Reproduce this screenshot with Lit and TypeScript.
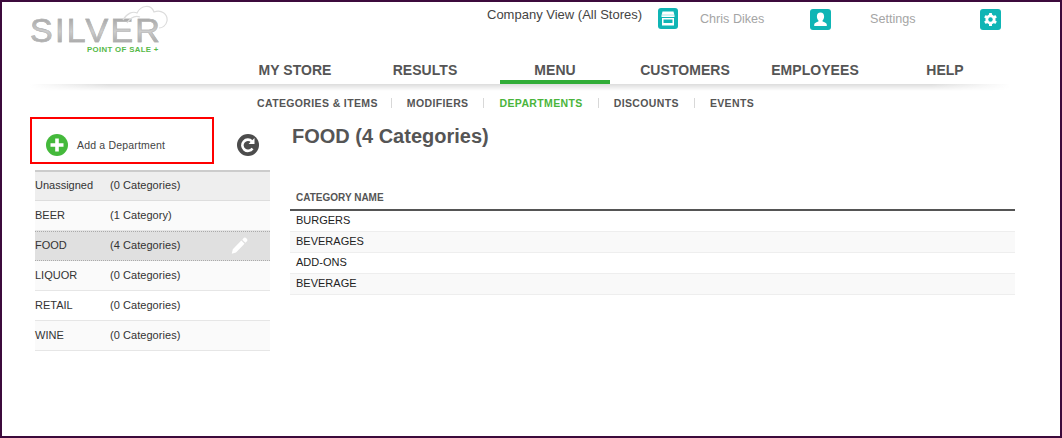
import { LitElement, html, css, svg } from "lit";
import { customElement } from "lit/decorators.js";

const NAV = ["MY STORE", "RESULTS", "MENU", "CUSTOMERS", "EMPLOYEES", "HELP"];
const SUB = ["CATEGORIES & ITEMS", "MODIFIERS", "DEPARTMENTS", "DISCOUNTS", "EVENTS"];
const DEPTS: [string, string][] = [
  ["Unassigned", "(0 Categories)"],
  ["BEER", "(1 Category)"],
  ["FOOD", "(4 Categories)"],
  ["LIQUOR", "(0 Categories)"],
  ["RETAIL", "(0 Categories)"],
  ["WINE", "(0 Categories)"],
];
const CATS = ["BURGERS", "BEVERAGES", "ADD-ONS", "BEVERAGE"];

const storeIcon = svg`<rect x="0" y="0" width="20" height="21" rx="3" fill="#0fb5b5"/>
<path d="M4.5 3.5h11l1 4v1.5h-13V7.5z M4 10h12v7.5H4z" fill="#fff"/><rect x="5.5" y="11.5" width="9" height="3.5" fill="#0fb5b5"/><rect x="3.5" y="6.5" width="13" height="1" fill="#0fb5b5" opacity=".35"/>`;
const userIcon = svg`<rect x="0" y="0" width="21" height="21" rx="3" fill="#0fb5b5"/>
<path d="M10.5 3.5c2.3 0 3.6 1.7 3.6 3.9 0 1.6-.7 3-1.5 3.9v1.1c1.8.7 4.2 1.5 4.2 3.2v1.4H4.2v-1.4c0-1.7 2.4-2.5 4.2-3.2v-1.1c-.8-.9-1.5-2.3-1.5-3.9 0-2.2 1.3-3.9 3.6-3.9z" fill="#fff"/>`;
const gearIcon = svg`<rect x="0" y="0" width="21" height="21" rx="3" fill="#0fb5b5"/>
<g fill="#fff"><circle cx="10.5" cy="10.5" r="5"/>
<rect x="9" y="4" width="3" height="13" rx=".5"/><rect x="9" y="4" width="3" height="13" rx=".5" transform="rotate(60 10.5 10.5)"/><rect x="9" y="4" width="3" height="13" rx=".5" transform="rotate(120 10.5 10.5)"/></g>
<circle cx="10.5" cy="10.5" r="2.2" fill="#0fb5b5"/>`;

@customElement("app-root")
export class AppRoot extends LitElement {
  static styles = css`
    :host { display: block; font-family: "Liberation Sans", Arial, sans-serif; }
    * { box-sizing: border-box; }
    .frame { width: 1062px; height: 438px; border: 2px solid #3c0a3c; background: #fff; overflow: hidden; display: flex; flex-direction: column; }
    .top { display: flex; height: 57px; align-items: flex-start; }
    .logo { position: relative; width: 140px; margin: 13px 0 0 28px; height: 44px; flex: none; }
    .silver { font-size: 34px; line-height: 30px; letter-spacing: 2.3px; font-weight: 400; display: block; white-space: nowrap;
      -webkit-text-stroke: .6px #b4b4b4;
      background: linear-gradient(180deg, #9d9d9d 0%, #cdcdcd 55%, #a2a2a2 100%); -webkit-background-clip: text; background-clip: text; color: transparent; }
    .pos { display: block; margin: 1px 0 0 57px; font-size: 7.8px; line-height: 8px; font-weight: 700; color: #56b948; letter-spacing: .35px; white-space: nowrap; }
    .cloud { position: absolute; left: 92px; top: -11px; }
    .company { margin: 6px 0 0 317px; width: 171px; font-size: 13px; line-height: 14px; color: #444; white-space: nowrap; }
    .ic { display: block; flex: none; margin-top: 6px; }
    .ic.u { margin-top: 7px; }
    .dim { font-size: 12.6px; line-height: 14px; color: #a5a5a5; margin-top: 10px; white-space: nowrap; }
    .chris { width: 110px; margin-left: 22px; }
    .settings { width: 110px; margin-left: 39px; }
    .nav { display: grid; grid-template-columns: repeat(6, 130px); margin-left: 228px; height: 25px; }
    .nav div { text-align: center; font-size: 14px; line-height: 22px; font-weight: 700; color: #555; letter-spacing: .05px; }
    .nav .on { background: linear-gradient(#31ad37, #31ad37) center bottom / 110px 4px no-repeat; }
    .shade { height: 7px; margin: 0 50px 0 28px; background: linear-gradient(90deg, #fff 0%, #ddd 8%, #ddd 92%, #fff 100%); -webkit-mask-image: linear-gradient(#000, transparent); mask-image: linear-gradient(#000, transparent); }
    .sub { display: flex; margin-left: 255px; height: 20px; margin-top: 2px; align-items: center; }
    .sub span { font-size: 10.5px; font-weight: 700; color: #555; letter-spacing: .37px; white-space: nowrap; line-height: 14px; }
    .sub span.on { color: #4ab53c; }
    .sub i { width: 1px; height: 10px; background: #d8d8d8; margin: 0 15px; display: block; }
    .sub i:first-of-type { margin-left: 13px; }
    .body { display: flex; margin-top: 4px; }
    .side { width: 288px; flex: none; padding-left: 28px; }
    .addrow { display: flex; align-items: flex-end; height: 47px; }
    .add { width: 184px; height: 47px; border: 2px solid #f00; display: flex; align-items: center; padding: 8px 0 0 14px; font-size: 10.5px; letter-spacing: .18px; color: #444; white-space: nowrap; }
    .add svg { margin-right: 9px; flex: none; }
    .reload { margin: 0 0 8px 23px; display: block; flex: none; }
    .list { margin: 6px 0 0 5px; width: 235px; border-top: 2px solid #ccc; }
    .row { display: flex; align-items: center; height: 30px; padding-bottom: 2px; font-size: 11px; color: #333; border-bottom: 1px solid #e6e6e6; }
    .row:nth-child(odd) { background: #fff; }
    .row:nth-child(even) { background: #fafafa; }
    .row.first { height: 29px; background: #eee; border-bottom-color: #ddd; }
    .row.sel { background: #e0e0e0; border-top: 1px dotted #aaa; border-bottom: 1px dotted #aaa; }
    .row b { font-weight: 400; width: 75px; flex: none; }
    .row em { font-style: normal; letter-spacing: .05px; flex: 1; }
    .row svg { margin-right: 22px; }
    .main { width: 725px; flex: none; }
    h1 { margin: 5px 0 0 2px; font-size: 20px; line-height: 28px; color: #555; font-weight: 700; }
    .th { margin-top: 35px; height: 26px; border-bottom: 2px solid #555; padding: 6px 0 0 6px; font-size: 10px; line-height: 14px; font-weight: 700; color: #555; }
    .td { height: 21px; border-bottom: 1px solid #eee; padding-left: 6px; font-size: 11px; line-height: 18px; color: #222; }
    .td:nth-child(even) { background: #f9f9f9; }
  `;

  render() {
    return html`<div class="frame">
      <div class="top">
        <div class="logo">
          <span class="silver">SILVER</span>
          <span class="pos">POINT OF SALE +</span>
          <svg class="cloud" width="46" height="30" viewBox="0 0 46 30" fill="none" stroke="#dcdcdc" stroke-width="1.2">
            <path d="M1 16C5 9 11 7 15 9C19 1 29 0 32 8C39 5 46 10 45 17C44 22 40 24 37 24"/>
            <path d="M5 19C9 13 13 11 18 13"/>
          </svg>
        </div>
        <div class="company">Company View (All Stores)</div>
        <svg class="ic" width="20" height="21" viewBox="0 0 20 21">${storeIcon}</svg>
        <div class="dim chris">Chris Dikes</div>
        <svg class="ic u" width="21" height="21" viewBox="0 0 21 21">${userIcon}</svg>
        <div class="dim settings">Settings</div>
        <svg class="ic u" width="21" height="21" viewBox="0 0 21 21">${gearIcon}</svg>
      </div>
      <div class="nav">${NAV.map((n) => html`<div class=${n === "MENU" ? "on" : ""}>${n}</div>`)}</div>
      <div class="shade"></div>
      <div class="sub">
        ${SUB.map((s, i) => html`${i ? html`<i></i>` : ""}<span class=${s === "DEPARTMENTS" ? "on" : ""}>${s}</span>`)}
      </div>
      <div class="body">
        <div class="side">
          <div class="addrow">
            <div class="add">
              <svg width="22" height="22" viewBox="0 0 22 22"><circle cx="11" cy="11" r="11" fill="#44b93b"/><path d="M9.2 4.5h3.6v4.7h4.7v3.6h-4.7v4.7H9.2v-4.7H4.5V9.2h4.7z" fill="#fff"/></svg>
              Add a Department
            </div>
            <svg class="reload" width="22" height="22" viewBox="0 0 22 22"><circle cx="11" cy="11" r="11" fill="#4c4c4c"/><path d="M15.5 14.5a5.6 5.6 0 1 1-.6-7.2" fill="none" stroke="#fff" stroke-width="2.6"/><path d="M17.5 4v6h-6z" fill="#fff"/></svg>
          </div>
          <div class="list">
            ${DEPTS.map(([a, b]) => html`<div class="row ${a === "Unassigned" ? "first" : ""} ${a === "FOOD" ? "sel" : ""}">
              <b>${a}</b><em>${b}</em>
              ${a === "FOOD" ? html`<svg width="17" height="17" viewBox="0 0 16 16"><path d="M12.2.8a1.6 1.6 0 0 1 2 .2l.8.8a1.6 1.6 0 0 1 .2 2L13.6 5.5l-3-3zM9.7 3.3l3 3-8 8.2-4 1.2 1-4.1z" fill="#fff"/></svg>` : ""}
            </div>`)}
          </div>
        </div>
        <div class="main">
          <h1>FOOD (4 Categories)</h1>
          <div class="th">CATEGORY NAME</div>
          <div>${CATS.map((c) => html`<div class="td">${c}</div>`)}</div>
        </div>
      </div>
    </div>`;
  }
}
